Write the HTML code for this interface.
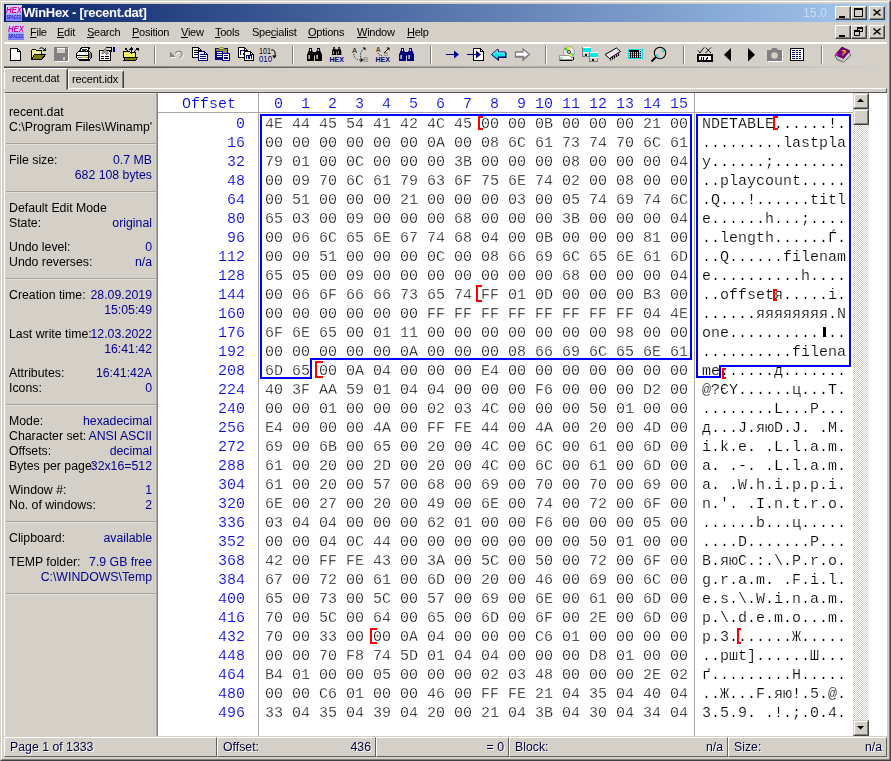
<!DOCTYPE html>
<html><head><meta charset="utf-8"><title>WinHex - [recent.dat]</title>
<style>
html,body{margin:0;padding:0;}
body{width:891px;height:761px;overflow:hidden;background:#d4d0c8;position:relative;font-family:"Liberation Sans",sans-serif;font-size:12px;color:#000;}
.abs,.abs>*{position:absolute;}
div{box-sizing:border-box;}
#hex,#lp,#menu,#title,.sp,.tabtxt{will-change:transform;}
#win{position:absolute;left:0;top:0;width:891px;height:761px;background:#d4d0c8;border-top:1px solid #d4d0c8;border-left:1px solid #d4d0c8;border-right:1px solid #404040;border-bottom:1px solid #404040;}
#win2{position:absolute;left:1px;top:1px;width:889px;height:759px;border-top:1px solid #fff;border-left:1px solid #fff;border-right:1px solid #808080;border-bottom:1px solid #808080;}
#title{position:absolute;left:4px;top:4px;width:883px;height:18px;background:linear-gradient(to right,#0a246a 0%,#a6caf0 100%);}
#title .cap{position:absolute;left:19px;top:1px;color:#fff;font-weight:bold;font-size:13px;line-height:16px;white-space:pre;letter-spacing:-0.3px;}
#title .ver{position:absolute;left:799px;top:1px;color:#c8dcf4;font-size:12.3px;line-height:16px;}
.wb{position:absolute;width:16px;height:14px;background:#d4d0c8;border-top:1px solid #fff;border-left:1px solid #fff;border-right:1px solid #404040;border-bottom:1px solid #404040;}
.wb:before{content:"";position:absolute;left:0;top:0;right:0;bottom:0;border-right:1px solid #808080;border-bottom:1px solid #808080;}
.wb svg{position:absolute;left:0;top:0;}
#menu{position:absolute;left:4px;top:22px;width:883px;height:20px;}
#menu span{position:absolute;top:3px;line-height:14px;font-size:11px;white-space:pre;letter-spacing:-0.25px;}
#menu u{text-decoration:underline;}
.hsep{position:absolute;height:2px;border-top:1px solid #808080;border-bottom:1px solid #fff;}
.vsep{position:absolute;width:2px;border-left:1px solid #808080;border-right:1px solid #fff;}
/* tabs */
#tab1{position:absolute;left:4px;top:68px;width:64px;height:21px;border-top:1px solid #fff;border-left:1px solid #fff;border-right:1px solid #404040;border-top-left-radius:2px;border-top-right-radius:2px;background:#d4d0c8;}
#tab1:before{content:"";position:absolute;right:0;top:1px;height:20px;border-right:1px solid #808080;}
#tab2{position:absolute;left:68px;top:70px;width:56px;height:18px;border-top:1px solid #fff;border-left:1px solid #fff;border-right:1px solid #404040;border-top-right-radius:2px;background:#d4d0c8;}
#tab2:before{content:"";position:absolute;right:0;top:1px;bottom:0;border-right:1px solid #808080;}
.tabtxt{position:absolute;font-size:11px;line-height:14px;white-space:pre;letter-spacing:-0.15px;}
/* left panel */
#lp{position:absolute;left:4px;top:93px;width:154px;height:643px;background:#d4d0c8;}
#lp .l,#lp .v{position:absolute;font-size:12.3px;line-height:14px;white-space:pre;}
#lp .l{left:5px;color:#000;}
#lp .v{right:6px;color:#00008c;text-align:right;}
#lp .s{position:absolute;left:2px;width:150px;height:2px;border-top:1px solid #a8a49c;border-bottom:1px solid #e4e1da;}
/* hex */
#hex{position:absolute;left:158px;top:93px;width:729px;height:643px;background:#fff;overflow:hidden;}
.mono{font-family:"Liberation Mono",monospace;font-size:15px;line-height:19px;white-space:pre;}
.r{position:absolute;left:0;height:19px;width:700px;}
.r span{position:absolute;top:0;font-family:"Liberation Mono",monospace;font-size:15px;line-height:19px;white-space:pre;color:#000;-webkit-text-stroke:0.3px #fff;}
.r .o{left:0;width:87px;text-align:right;color:#0000e0;-webkit-text-stroke:0.15px #fff;}
.r .h{left:107px;}
.r .t{left:544px;-webkit-text-stroke:0.2px #fff;}
.blue{color:#0000e0 !important;-webkit-text-stroke:0.15px #fff !important;}
.k{font-weight:normal;color:transparent;-webkit-text-stroke:0;background:linear-gradient(#000,#000) 4px 2px/3px 10px no-repeat;}
.bl{position:absolute;background:#0000ff;}
.rd{position:absolute;background:#ff0000;}
/* status */
.sp{position:absolute;top:737px;height:20px;border-top:1px solid #fff;border-left:1px solid #fff;border-right:1px solid #606060;border-bottom:1px solid #606060;font-size:12.3px;line-height:14px;color:#00003c;white-space:pre;text-shadow:1px 1px 0 #fff;}
.sp i{font-style:normal;position:absolute;top:2px;}
/* scrollbar */
.sbb{position:absolute;width:16px;height:16px;background:#d4d0c8;border-top:1px solid #d4d0c8;border-left:1px solid #d4d0c8;border-right:1px solid #404040;border-bottom:1px solid #404040;}
.sbb:before{content:"";position:absolute;left:0;top:0;right:0;bottom:0;border-top:1px solid #fff;border-left:1px solid #fff;border-right:1px solid #808080;border-bottom:1px solid #808080;}
</style></head><body>
<div id="win"></div><div id="win2"></div>
<div id="title">
<svg style="position:absolute;left:2px;top:1px" width="16" height="16" viewBox="0 0 16 16"><defs><linearGradient id="g1" x1="0" y1="0" x2="0" y2="1"><stop offset="0" stop-color="#b4b4fc"/><stop offset="1" stop-color="#7878f8"/></linearGradient></defs><rect width="16" height="16" fill="#d6d2fc"/><rect y="8" width="16" height="8" fill="url(#g1)"/><text x="0" y="7.500" font-family="Liberation Sans,sans-serif" font-size="9" font-weight="bold" font-style="italic" fill="#c800b0" textLength="16" lengthAdjust="spacingAndGlyphs">HEX</text><text x="0.500" y="13.500" font-family="Liberation Sans,sans-serif" font-size="5" font-weight="bold" fill="#1818d0" textLength="15" lengthAdjust="spacingAndGlyphs">SPACES</text></svg>
<div class="cap">WinHex - [recent.dat]</div>
<div class="ver">15.0</div>
<div class="wb" style="left:831px;top:2px"><svg width="16" height="14"><rect x="3" y="9" width="6" height="2" fill="#000"/></svg></div>
<div class="wb" style="left:847px;top:2px"><svg width="16" height="14"><rect x="2.5" y="1.5" width="8" height="8" fill="none" stroke="#000"/><rect x="2" y="1" width="9" height="2" fill="#000"/></svg></div>
<div class="wb" style="left:865px;top:2px"><svg width="16" height="14"><path d="M3.5 2.5L10.5 8.5M10.5 2.5L3.5 8.5" stroke="#000" stroke-width="1.5" fill="none"/></svg></div>
</div>
<div id="menu">
<svg style="position:absolute;left:4px;top:2px" width="16" height="16" viewBox="0 0 16 16"><defs><linearGradient id="g2" x1="0" y1="0" x2="0" y2="1"><stop offset="0" stop-color="#b4b4fc"/><stop offset="1" stop-color="#7878f8"/></linearGradient></defs><rect width="16" height="16" fill="#d6d2fc"/><rect y="8" width="16" height="8" fill="url(#g2)"/><text x="0" y="7.500" font-family="Liberation Sans,sans-serif" font-size="9" font-weight="bold" font-style="italic" fill="#c800b0" textLength="16" lengthAdjust="spacingAndGlyphs">HEX</text><text x="0.500" y="13.500" font-family="Liberation Sans,sans-serif" font-size="5" font-weight="bold" fill="#1818d0" textLength="15" lengthAdjust="spacingAndGlyphs">SPACES</text></svg>
<span style="left:26px"><u>F</u>ile</span>
<span style="left:53px"><u>E</u>dit</span>
<span style="left:83px"><u>S</u>earch</span>
<span style="left:128px"><u>P</u>osition</span>
<span style="left:177px"><u>V</u>iew</span>
<span style="left:211px"><u>T</u>ools</span>
<span style="left:248px">Spe<u>c</u>ialist</span>
<span style="left:304px"><u>O</u>ptions</span>
<span style="left:353px"><u>W</u>indow</span>
<span style="left:403px"><u>H</u>elp</span>
<div class="wb" style="left:831px;top:3px"><svg width="16" height="14"><rect x="3" y="9" width="6" height="2" fill="#000"/></svg></div>
<div class="wb" style="left:847px;top:3px"><svg width="16" height="14"><path d="M5.5 1.5h5v4h-5z" fill="none" stroke="#000"/><rect x="5" y="1" width="6" height="2" fill="#000"/><path d="M2.5 4.5h5v5h-5z" fill="#d4d0c8" stroke="#000"/><rect x="2" y="4" width="6" height="2" fill="#000"/></svg></div>
<div class="wb" style="left:865px;top:3px"><svg width="16" height="14"><path d="M3.5 2.5L10.5 8.5M10.5 2.5L3.5 8.5" stroke="#000" stroke-width="1.5" fill="none"/></svg></div>
</div>
<div style="position:absolute;left:4px;top:42px;width:883px;height:2px;background:#fff"></div>
<div id="tb" style="position:absolute;left:0;top:44px;width:891px;height:22px"><svg style="position:absolute;left:9px;top:2px" width="18" height="17" viewBox="0 0 18 17" shape-rendering="crispEdges"><path d="M1.5 2.5H8.5L11.5 5.500V14.500H1.500Z" fill="#fff" stroke="#000"/><path d="M8.500 2.500V5.500H11.500" fill="none" stroke="#000"/></svg>
<svg style="position:absolute;left:31px;top:2px" width="18" height="17" viewBox="0 0 18 17" shape-rendering="crispEdges"><path d="M0.500 4.500L1.500 3.500H4.500L5.500 4.500H10.500V8.500H3.500L0.500 13.500Z" fill="#f4f49c" stroke="#000"/><path d="M3.500 8.500H14.500L10.500 13.500H0.500Z" fill="#808000" stroke="#000"/><path d="M8.500 2.500Q10.500 0.500 13 3" fill="none" stroke="#000" shape-rendering="auto"/><path d="M14.500 1.500V5H11z" fill="#000"/></svg>
<svg style="position:absolute;left:54px;top:2px" width="18" height="17" viewBox="0 0 18 17" shape-rendering="crispEdges"><rect x="1" y="2" width="14" height="14" fill="#fff"/><rect x="0" y="1" width="14" height="14" fill="#808080"/><rect x="3" y="2" width="8" height="5" fill="#d4d0c8"/><rect x="3" y="2" width="8" height="1" fill="#fff"/><rect x="9" y="11" width="2" height="3" fill="#d4d0c8"/><rect x="12" y="2" width="1" height="1" fill="#d4d0c8"/></svg>
<svg style="position:absolute;left:76px;top:2px" width="18" height="17" viewBox="0 0 18 17" shape-rendering="crispEdges"><path d="M3.500 5.500L5.500 1.500H13.500L11.500 5.500Z" fill="#fff" stroke="#000"/><path d="M6 3.500H11M5.500 4.500H10" stroke="#000" fill="none" stroke-width="0.800"/><path d="M0.500 7.500L2.500 5.500H13.500L15.500 7.500V11.500L13.500 13.500H2.500L0.500 11.500Z" fill="#fff" stroke="#000"/><path d="M0.500 9.500H12.500M12.500 6V13" stroke="#000" fill="none"/><rect x="13" y="7" width="2" height="5" fill="#808080"/><rect x="2" y="11" width="10" height="1" fill="#808080"/><rect x="7" y="10" width="3" height="1.500" fill="#e8e800"/><path d="M2.500 14.500H13.500" stroke="#000"/></svg>
<svg style="position:absolute;left:99px;top:2px" width="18" height="17" viewBox="0 0 18 17" shape-rendering="crispEdges"><path d="M0.500 4.500H11.500V14.500H0.500Z" fill="#fff" stroke="#000"/><path d="M2 10.500H5M6 10.500H10M2 12.500H5M6 12.500H10" stroke="#000"/><path d="M2.500 7.500L6.500 2.500L9.500 7.500L7.500 8.500L5.500 6.500L4 8z" fill="#a0a0a0" stroke="#404040" stroke-width="0.600" shape-rendering="auto"/><path d="M6.500 1.500H12.500V5.500H10" fill="none" stroke="#000"/><rect x="14" y="1" width="2" height="5" fill="#000080"/></svg>
<svg style="position:absolute;left:123px;top:2px" width="18" height="17" viewBox="0 0 18 17" shape-rendering="crispEdges"><path d="M0.500 5.500H6.500L7.500 6.500H12.500V11.500H0.500Z" fill="#f0f060" stroke="#000"/><path d="M2.500 11.500H14.500L12.500 14.500H0.500Z" fill="#808000" stroke="#000"/><path d="M8.500 8V2M3 3L6 6M14 3L11 6" stroke="#000" fill="none" shape-rendering="auto"/><path d="M6.500 3.500L8.500 1L10.500 3.500ZM1.500 1.500H5L1.500 5ZM15.500 1.500H12L15.500 5Z" fill="#000"/></svg>
<div class="vsep" style="left:154px;top:2px;height:18px"></div>
<svg style="position:absolute;left:169px;top:2px" width="18" height="17" viewBox="0 0 18 17" shape-rendering="crispEdges"><g shape-rendering="auto"><g transform="translate(1,1)"><path d="M1 5.500V11H6.500Z" fill="#fff"/><path d="M6 7.500Q8 5 10.500 5.300Q13.500 6 13 9Q12.500 11.500 10.500 12" fill="none" stroke="#fff" stroke-width="1.200"/></g><path d="M1 5.500V11H6.500Z" fill="#808080"/><path d="M6 7.500Q8 5 10.500 5.300Q13.500 6 13 9Q12.500 11.500 10.500 12" fill="none" stroke="#808080" stroke-width="1.200"/></g></svg>
<svg style="position:absolute;left:192px;top:2px" width="18" height="17" viewBox="0 0 18 17" shape-rendering="crispEdges"><path d="M0.5 1.5H6.5L9.5 4.5V11.5H0.5Z" fill="#fff" stroke="#000"/><path d="M6.5 1.5V4.5H9.5" fill="none" stroke="#000"/><path d="M2 4.5H6M2 6.5H8M2 8.5H8" stroke="#000"/><path d="M6.5 5.5H12.5L15.5 8.5V14.5H6.5Z" fill="#fff" stroke="#000080"/><path d="M12.5 5.5V8.5H15.5" fill="none" stroke="#000080"/><path d="M8 8.5H12M8 10.5H14M8 12.5H14" stroke="#000080"/></svg>
<svg style="position:absolute;left:214px;top:2px" width="18" height="17" viewBox="0 0 18 17" shape-rendering="crispEdges"><rect x="1.500" y="2.500" width="12" height="11" fill="#8c8c60" stroke="#000080"/><path d="M4 3.500L6 1.500H9L11 3.500Z" fill="#e8e000" stroke="#606000" stroke-width="0.600" shape-rendering="auto"/><rect x="6.500" y="2" width="2" height="1" fill="#d4d0c8"/><rect x="2.500" y="5.500" width="6" height="7" fill="#fff" stroke="#000080"/><path d="M3 7.500H8M3 9.500H8M3 11.500H8" stroke="#000080"/><rect x="4" y="8" width="3" height="1" fill="#fff"/><rect x="8.500" y="7.500" width="7" height="7" fill="#fff" stroke="#000080"/><path d="M10 9.500H14M10 11.500H14M10 12.500H14" stroke="#000080"/><rect x="11" y="10" width="4" height="1" fill="#fff"/></svg>
<svg style="position:absolute;left:238px;top:2px" width="18" height="17" viewBox="0 0 18 17" shape-rendering="crispEdges"><path d="M0.5 1.5H6.5L9.5 4.5V11.5H0.5Z" fill="#fff" stroke="#000"/><path d="M6.5 1.5V4.5H9.5" fill="none" stroke="#000"/><path d="M2.500 9V4.500H5.500M5.500 6.500V9" stroke="#000080" stroke-width="1.500" fill="none"/><path d="M6.5 5.5H12.5L15.5 8.5V14.5H6.5Z" fill="#fff" stroke="#000"/><path d="M12.5 5.5V8.5H15.5" fill="none" stroke="#000"/><path d="M8.500 13V9.500H13.500V13M11 10V13" stroke="#000080" stroke-width="1.400" fill="none"/></svg>
<svg style="position:absolute;left:259px;top:2px" width="19" height="18" viewBox="0 0 19 18" shape-rendering="crispEdges"><text x="0" y="8" font-family="Liberation Sans,sans-serif" font-size="8.500" fill="#000" textLength="12" lengthAdjust="spacingAndGlyphs">101</text><text x="0" y="16" font-family="Liberation Sans,sans-serif" font-size="9" fill="#000080" textLength="13" lengthAdjust="spacingAndGlyphs">010</text><path d="M12 4Q17 3 16 10" fill="none" stroke="#000" shape-rendering="auto"/><path d="M13 9.500H17.500L15.500 12.500Z" fill="#000" shape-rendering="auto"/></svg>
<div class="vsep" style="left:292px;top:2px;height:18px"></div>
<svg style="position:absolute;left:307px;top:2px" width="18" height="17" viewBox="0 0 18 17" shape-rendering="crispEdges"><g transform="translate(0,2) scale(1.0)" shape-rendering="auto"><path d="M2 0H5V2L7 6.500V13H0V6.500L2 2Z" fill="#000"/><path d="M10 0H13V2L15 6.500V13H8V6.500L10 2Z" fill="#000"/><rect x="6" y="4" width="3" height="3.500" fill="#000"/><rect x="3" y="1" width="1" height="2" fill="#fff"/><rect x="10.800" y="1" width="1" height="2" fill="#fff"/><rect x="1.500" y="7" width="1.200" height="4" fill="#fff"/><rect x="9.500" y="7" width="1.200" height="4" fill="#fff"/></g></svg>
<svg style="position:absolute;left:329px;top:2px" width="18" height="17" viewBox="0 0 18 17" shape-rendering="crispEdges"><g transform="translate(3,1) scale(0.62)" shape-rendering="auto"><path d="M2 0H5V2L7 6.500V13H0V6.500L2 2Z" fill="#000"/><path d="M10 0H13V2L15 6.500V13H8V6.500L10 2Z" fill="#000"/><rect x="6" y="4" width="3" height="3.500" fill="#000"/><rect x="3" y="1" width="1" height="2" fill="#fff"/><rect x="10.800" y="1" width="1" height="2" fill="#fff"/><rect x="1.500" y="7" width="1.200" height="4" fill="#fff"/><rect x="9.500" y="7" width="1.200" height="4" fill="#fff"/></g><text x="0.500" y="16" font-family="Liberation Sans,sans-serif" font-size="7" font-weight="bold" fill="#000080" textLength="14.500" lengthAdjust="spacingAndGlyphs">HEX</text></svg>
<svg style="position:absolute;left:351px;top:2px" width="18" height="17" viewBox="0 0 18 17" shape-rendering="crispEdges"><text x="1" y="7" font-family="Liberation Sans,sans-serif" font-size="7.500" fill="#000">A</text><text x="12" y="16" font-family="Liberation Sans,sans-serif" font-size="8" fill="#808080">B</text><g shape-rendering="auto"><path d="M3 8Q3 14 10 14" fill="none" stroke="#000" stroke-dasharray="1 1.200"/><path d="M9.500 11.500L12.500 14L9.500 16.500Z" fill="#000"/><path d="M9.500 11Q9 5 13.500 2.500" fill="none" stroke="#000" stroke-dasharray="1 1.200"/><path d="M11.500 1.500H14.500V4.500Z" fill="#000"/></g></svg>
<svg style="position:absolute;left:375px;top:2px" width="18" height="17" viewBox="0 0 18 17" shape-rendering="crispEdges"><text x="1" y="6" font-family="Liberation Sans,sans-serif" font-size="6.500" fill="#000">A</text><text x="9" y="10" font-family="Liberation Sans,sans-serif" font-size="6" fill="#808080">B</text><g shape-rendering="auto"><path d="M3 7Q4 10 8 9.500" fill="none" stroke="#000" stroke-dasharray="1 1"/><path d="M9 7L14 2" fill="none" stroke="#000"/><path d="M11.500 1.500H14.500V4.500Z" fill="#000"/></g><text x="0.500" y="16" font-family="Liberation Sans,sans-serif" font-size="7" font-weight="bold" fill="#000080" textLength="14.500" lengthAdjust="spacingAndGlyphs">HEX</text></svg>
<svg style="position:absolute;left:399px;top:2px" width="18" height="17" viewBox="0 0 18 17" shape-rendering="crispEdges"><g transform="translate(0,2) scale(1.0)" shape-rendering="auto"><path d="M2 0H5V2L7 6.500V13H0V6.500L2 2Z" fill="#000080"/><path d="M10 0H13V2L15 6.500V13H8V6.500L10 2Z" fill="#000080"/><rect x="6" y="4" width="3" height="3.500" fill="#000080"/><rect x="3" y="1" width="1" height="2" fill="#fff"/><rect x="10.800" y="1" width="1" height="2" fill="#fff"/><rect x="1.500" y="7" width="1.200" height="4" fill="#fff"/><rect x="9.500" y="7" width="1.200" height="4" fill="#fff"/></g></svg>
<div class="vsep" style="left:430px;top:2px;height:18px"></div>
<svg style="position:absolute;left:445px;top:2px" width="18" height="17" viewBox="0 0 18 17" shape-rendering="crispEdges"><path d="M1 8.500H10" stroke="#000080" fill="none"/><path d="M9 4.500L14 8.500L9 12.500Z" fill="#000080" shape-rendering="auto"/></svg>
<svg style="position:absolute;left:467px;top:2px" width="18" height="17" viewBox="0 0 18 17" shape-rendering="crispEdges"><path d="M6.5 2.5H13.5L16.5 5.5V14.5H6.5Z" fill="#fff" stroke="#000"/><path d="M13.5 2.5V5.5H16.5" fill="none" stroke="#000"/><path d="M0 8.500H10" stroke="#000080" fill="none"/><path d="M9 4.500L14 8.500L9 12.500Z" fill="#000080" shape-rendering="auto"/></svg>
<svg style="position:absolute;left:490px;top:2px" width="18" height="17" viewBox="0 0 18 17" shape-rendering="crispEdges"><g shape-rendering="auto"><path d="M2.500 9.500L9 4V7H16.500V12H9V15Z" fill="#000"/><path d="M1.500 8.500L8 3V6H15.500V11H8V14Z" fill="#00e8e8" stroke="#000080"/><path d="M3 8.500L7.500 4.500V7H15" fill="none" stroke="#c0ffff" stroke-width="0.800"/></g></svg>
<svg style="position:absolute;left:514px;top:2px" width="18" height="17" viewBox="0 0 18 17" shape-rendering="crispEdges"><g shape-rendering="auto"><path d="M15.500 8.500L9 3V6H1.500V11H9V14Z" fill="#fff" stroke="#808080" stroke-width="1.300"/><path d="M1.500 10.500H9.500V13L14.500 9" fill="none" stroke="#808080" stroke-width="1.500"/></g></svg>
<div class="vsep" style="left:545px;top:2px;height:18px"></div>
<svg style="position:absolute;left:558px;top:2px" width="18" height="17" viewBox="0 0 18 17" shape-rendering="crispEdges"><g shape-rendering="auto"><ellipse cx="11" cy="6" rx="5.500" ry="5.500" fill="#e8e8e8" stroke="#808080" stroke-width="0.600"/><path d="M11 6L9.500 0.700L12.500 0.700Z" fill="#f0f000"/><path d="M11 6L6 3L7.500 1.500Z" fill="#00c000"/><path d="M11 6L16 8L15 10Z" fill="#00e0e0"/><path d="M11 6L13 10.500L15 9.500Z" fill="#e8e800"/><circle cx="11" cy="6" r="1.500" fill="#fff" stroke="#000" stroke-width="0.800"/><path d="M1.500 9.500H11L13 11.500H15.500V13.500H1.500Z" fill="#fff" stroke="#808080" stroke-width="0.800"/><path d="M1.500 14.500H14.500M15.500 11V14" stroke="#000" fill="none"/><rect x="2.500" y="11.500" width="2" height="1" fill="#00c000"/></g></svg>
<svg style="position:absolute;left:582px;top:2px" width="18" height="17" viewBox="0 0 18 17" shape-rendering="crispEdges"><rect x="0" y="1" width="9" height="10" fill="#808080"/><rect x="1" y="1" width="8" height="1" fill="#fff"/><rect x="1" y="2" width="8" height="4" fill="#00e8e8"/><rect x="1" y="6" width="8" height="1" fill="#fff"/><rect x="1" y="7" width="7" height="3" fill="#d4d0c8"/><rect x="3" y="8" width="2" height="2" fill="#000"/><rect x="7" y="6" width="9" height="10" fill="#808080"/><rect x="8" y="6" width="8" height="1" fill="#fff"/><rect x="8" y="7" width="8" height="4" fill="#00e8e8"/><rect x="8" y="11" width="8" height="1" fill="#fff"/><rect x="8" y="12" width="7" height="3" fill="#d4d0c8"/><rect x="10" y="13" width="2" height="2" fill="#000"/></svg>
<svg style="position:absolute;left:604px;top:2px" width="18" height="17" viewBox="0 0 18 17" shape-rendering="crispEdges"><g shape-rendering="auto"><path d="M1 8.500L12.500 2L16.500 5.500L5.500 12.500Z" fill="#e8e8e8" stroke="#000" stroke-width="1"/><path d="M6.500 12V14.500M8.500 11V13.500M10.500 10V12.500M12.500 8.500V11M14.500 7.500V10" stroke="#000" stroke-width="1.200"/><path d="M7 11.500L15 6.500" stroke="#a000a0" stroke-width="0.900" stroke-dasharray="1 1"/></g></svg>
<svg style="position:absolute;left:627px;top:2px" width="18" height="17" viewBox="0 0 18 17" shape-rendering="crispEdges"><rect x="1" y="3" width="15" height="10" fill="#00e8e8"/><rect x="2" y="4" width="13" height="8" fill="#d0d0d0"/><rect x="2" y="4" width="10" height="2" fill="#000"/><path d="M3.500 6V12M5.500 6V12M7.500 6V12M9.500 6V12M11.500 6V12" stroke="#000"/><path d="M13.500 5V12" stroke="#000080" stroke-dasharray="1 1"/><path d="M2 7.500H13M2 9.500H13M2 11.500H13" stroke="#808080" stroke-dasharray="1 1"/></svg>
<svg style="position:absolute;left:650px;top:2px" width="18" height="17" viewBox="0 0 18 17" shape-rendering="crispEdges"><g shape-rendering="auto"><circle cx="10" cy="7" r="5.700" fill="#d4d0c8" stroke="#000" stroke-width="1.100"/><path d="M11 3Q13.500 4 13.500 6.500" fill="none" stroke="#00e0e0" stroke-width="1.200"/><path d="M6.500 8Q7 10 9 10.700" fill="none" stroke="#00e0e0" stroke-width="1.200"/><path d="M6 11L1.500 15.500" stroke="#000" stroke-width="2"/></g></svg>
<div class="vsep" style="left:683px;top:2px;height:18px"></div>
<svg style="position:absolute;left:697px;top:2px" width="18" height="17" viewBox="0 0 18 17" shape-rendering="crispEdges"><g shape-rendering="auto"><path d="M1 4.500L3 7L7 1.500" fill="none" stroke="#000" stroke-width="0.900"/><path d="M8.500 1.500L14 7M14 1.500L8.500 7" fill="none" stroke="#000" stroke-width="0.900"/></g><rect x="0" y="8" width="16" height="8" fill="#000"/><rect x="2" y="10" width="12" height="4" fill="#fff"/><path d="M4.500 11V14M6.500 11V14M9 14L11 11" stroke="#000"/></svg>
<svg style="position:absolute;left:723px;top:2px" width="18" height="17" viewBox="0 0 18 17" shape-rendering="crispEdges"><path d="M8 2V15.500L1 8.750Z" fill="#000" shape-rendering="auto"/></svg>
<svg style="position:absolute;left:747px;top:2px" width="18" height="17" viewBox="0 0 18 17" shape-rendering="crispEdges"><path d="M1 2V15.500L8 8.750Z" fill="#000" shape-rendering="auto"/></svg>
<svg style="position:absolute;left:767px;top:2px" width="18" height="17" viewBox="0 0 18 17" shape-rendering="crispEdges"><rect x="1" y="5" width="15" height="11" fill="#fff"/><rect x="0" y="4" width="15" height="11" fill="#808080"/><path d="M4 4L5.500 2H9.500L11 4Z" fill="#808080" shape-rendering="auto"/><circle cx="7.500" cy="9.500" r="3.300" fill="#d4d0c8" shape-rendering="auto"/></svg>
<svg style="position:absolute;left:789px;top:2px" width="18" height="17" viewBox="0 0 18 17" shape-rendering="crispEdges"><rect x="1.500" y="2.500" width="13" height="12" fill="#fff" stroke="#000" stroke-width="1"/><path d="M3 4.500H13M3 6.500H13M3 8.500H13M3 10.500H13M3 12.500H13" stroke="#000080" stroke-dasharray="3 1 2 1 2 1"/></svg>
<div class="vsep" style="left:821px;top:2px;height:18px"></div>
<svg style="position:absolute;left:834px;top:2px" width="18" height="18" viewBox="0 0 18 18" shape-rendering="crispEdges"><g shape-rendering="auto"><path d="M1 9.500L3 13.500L9.500 16L16.500 10L15.500 6.500Z" fill="#fff" stroke="#404040" stroke-width="0.800"/><path d="M2 11L9 13.800L16 8M2.500 12.300L9.300 15L16 9.200" fill="none" stroke="#808080" stroke-width="0.600"/><path d="M1 9L8 1L16 5L9.500 12.500Z" fill="#800080" stroke="#400040" stroke-width="0.800"/><path d="M1 9L2.500 7.500L4 8L3 10Z" fill="#c040c0"/><text x="7" y="9.500" font-family="Liberation Sans,sans-serif" font-size="8" font-weight="bold" fill="#ffe800" transform="rotate(12 9 7)">?</text></g></svg></div>
<div style="position:absolute;left:4px;top:66px;width:883px;height:1px;background:linear-gradient(to right,#808080,#d4d0c8)"></div><div style="position:absolute;left:4px;top:67px;width:883px;height:1px;background:linear-gradient(to right,#404040,#d4d0c8)"></div>
<!-- tab strip -->
<div style="position:absolute;left:68px;top:88px;width:819px;height:5px;border-top:1px solid #fff;border-bottom:1px solid #585858;border-right:1px solid #585858;background:#d4d0c8"></div>
<div style="position:absolute;left:5px;top:92px;width:153px;height:1px;background:#585858"></div>
<div id="tab2"></div><div class="tabtxt" style="left:72px;top:72px">recent.idx</div>
<div id="tab1"></div><div class="tabtxt" style="left:12px;top:71px">recent.dat</div>
<div id="lp">
<div style="position:absolute;left:0;top:0;width:154px;height:643px;border-left:1px solid #fff;border-top:1px solid #e8e6e0;border-right:1px solid #808080"></div><div style="position:absolute;left:152px;top:0;width:1px;height:643px;background:#a8a8a4"></div>
<div class="l" style="top:12px">recent.dat</div>
<div class="l" style="top:27px">C:\Program Files\Winamp'</div>
<div class="l" style="top:60px">File size:</div>
<div class="v" style="top:60px">0.7 MB</div>
<div class="v" style="top:75px">682 108 bytes</div>
<div class="l" style="top:108px">Default Edit Mode</div>
<div class="l" style="top:123px">State:</div>
<div class="v" style="top:123px">original</div>
<div class="l" style="top:147px">Undo level:</div>
<div class="v" style="top:147px">0</div>
<div class="l" style="top:162px">Undo reverses:</div>
<div class="v" style="top:162px">n/a</div>
<div class="l" style="top:195px">Creation time:</div>
<div class="v" style="top:195px">28.09.2019</div>
<div class="v" style="top:210px">15:05:49</div>
<div class="l" style="top:234px">Last write time:</div>
<div class="v" style="top:234px">12.03.2022</div>
<div class="v" style="top:249px">16:41:42</div>
<div class="l" style="top:273px">Attributes:</div>
<div class="v" style="top:273px">16:41:42A</div>
<div class="l" style="top:288px">Icons:</div>
<div class="v" style="top:288px">0</div>
<div class="l" style="top:321px">Mode:</div>
<div class="v" style="top:321px">hexadecimal</div>
<div class="l" style="top:336px">Character set:</div>
<div class="v" style="top:336px">ANSI ASCII</div>
<div class="l" style="top:351px">Offsets:</div>
<div class="v" style="top:351px">decimal</div>
<div class="l" style="top:366px">Bytes per page:</div>
<div class="v" style="top:366px">32x16=512</div>
<div class="l" style="top:390px">Window #:</div>
<div class="v" style="top:390px">1</div>
<div class="l" style="top:405px">No. of windows:</div>
<div class="v" style="top:405px">2</div>
<div class="l" style="top:438px">Clipboard:</div>
<div class="v" style="top:438px">available</div>
<div class="l" style="top:462px">TEMP folder:</div>
<div class="v" style="top:462px">7.9 GB free</div>
<div class="v" style="top:477px">C:\WINDOWS\Temp</div>
<div class="s" style="top:50px"></div>
<div class="s" style="top:98px"></div>
<div class="s" style="top:185px"></div>
<div class="s" style="top:311px"></div>
<div class="s" style="top:428px"></div>
<div class="s" style="top:500px"></div>
</div>
<div id="hex">
<div style="position:absolute;left:100px;top:0;width:1px;height:643px;background:#aaa8a0"></div>
<div style="position:absolute;left:536px;top:0;width:1px;height:643px;background:#aaa8a0"></div>
<div style="position:absolute;left:0;top:19px;width:695px;height:1px;background:#aaa8a0"></div>
<div class="r" style="top:2px"><span class="o blue" style="width:78px">Offset</span><span class="h blue" style="left:107px"> 0  1  2  3  4  5  6  7  8  9 10 11 12 13 14 15</span></div>
<div class="r" style="top:22px"><span class="o">0</span><span class="h">4E 44 45 54 41 42 4C 45 00 00 0B 00 00 00 21 00</span><span class="t">NDETABLE......!.</span></div>
<div class="r" style="top:41px"><span class="o">16</span><span class="h">00 00 00 00 00 00 0A 00 08 6C 61 73 74 70 6C 61</span><span class="t">.........lastpla</span></div>
<div class="r" style="top:60px"><span class="o">32</span><span class="h">79 01 00 0C 00 00 00 3B 00 00 00 08 00 00 00 04</span><span class="t">y......;........</span></div>
<div class="r" style="top:79px"><span class="o">48</span><span class="h">00 09 70 6C 61 79 63 6F 75 6E 74 02 00 08 00 00</span><span class="t">..playcount.....</span></div>
<div class="r" style="top:98px"><span class="o">64</span><span class="h">00 51 00 00 00 21 00 00 00 03 00 05 74 69 74 6C</span><span class="t">.Q...!......titl</span></div>
<div class="r" style="top:117px"><span class="o">80</span><span class="h">65 03 00 09 00 00 00 68 00 00 00 3B 00 00 00 04</span><span class="t">e......h...;....</span></div>
<div class="r" style="top:136px"><span class="o">96</span><span class="h">00 06 6C 65 6E 67 74 68 04 00 0B 00 00 00 81 00</span><span class="t">..length......Ѓ.</span></div>
<div class="r" style="top:155px"><span class="o">112</span><span class="h">00 00 51 00 00 00 0C 00 08 66 69 6C 65 6E 61 6D</span><span class="t">..Q......filenam</span></div>
<div class="r" style="top:174px"><span class="o">128</span><span class="h">65 05 00 09 00 00 00 00 00 00 00 68 00 00 00 04</span><span class="t">e..........h....</span></div>
<div class="r" style="top:193px"><span class="o">144</span><span class="h">00 06 6F 66 66 73 65 74 FF 01 0D 00 00 00 B3 00</span><span class="t">..offsetя.....і.</span></div>
<div class="r" style="top:212px"><span class="o">160</span><span class="h">00 00 00 00 00 00 FF FF FF FF FF FF FF FF 04 4E</span><span class="t">......яяяяяяяя.N</span></div>
<div class="r" style="top:231px"><span class="o">176</span><span class="h">6F 6E 65 00 01 11 00 00 00 00 00 00 00 98 00 00</span><span class="t">one..........<b class="k">▌</b>..</span></div>
<div class="r" style="top:250px"><span class="o">192</span><span class="h">00 00 00 00 00 0A 00 00 00 08 66 69 6C 65 6E 61</span><span class="t">..........filena</span></div>
<div class="r" style="top:269px"><span class="o">208</span><span class="h">6D 65 00 0A 04 00 00 00 E4 00 00 00 00 00 00 00</span><span class="t">me......д.......</span></div>
<div class="r" style="top:288px"><span class="o">224</span><span class="h">40 3F AA 59 01 04 04 00 00 00 F6 00 00 00 D2 00</span><span class="t">@?ЄY......ц...Т.</span></div>
<div class="r" style="top:307px"><span class="o">240</span><span class="h">00 00 01 00 00 00 02 03 4C 00 00 00 50 01 00 00</span><span class="t">........L...P...</span></div>
<div class="r" style="top:326px"><span class="o">256</span><span class="h">E4 00 00 00 4A 00 FF FE 44 00 4A 00 20 00 4D 00</span><span class="t">д...J.яюD.J. .M.</span></div>
<div class="r" style="top:345px"><span class="o">272</span><span class="h">69 00 6B 00 65 00 20 00 4C 00 6C 00 61 00 6D 00</span><span class="t">i.k.e. .L.l.a.m.</span></div>
<div class="r" style="top:364px"><span class="o">288</span><span class="h">61 00 20 00 2D 00 20 00 4C 00 6C 00 61 00 6D 00</span><span class="t">a. .-. .L.l.a.m.</span></div>
<div class="r" style="top:383px"><span class="o">304</span><span class="h">61 00 20 00 57 00 68 00 69 00 70 00 70 00 69 00</span><span class="t">a. .W.h.i.p.p.i.</span></div>
<div class="r" style="top:402px"><span class="o">320</span><span class="h">6E 00 27 00 20 00 49 00 6E 00 74 00 72 00 6F 00</span><span class="t">n.&#x27;. .I.n.t.r.o.</span></div>
<div class="r" style="top:421px"><span class="o">336</span><span class="h">03 04 04 00 00 00 62 01 00 00 F6 00 00 00 05 00</span><span class="t">......b...ц.....</span></div>
<div class="r" style="top:440px"><span class="o">352</span><span class="h">00 00 04 0C 44 00 00 00 00 00 00 00 50 01 00 00</span><span class="t">....D.......P...</span></div>
<div class="r" style="top:459px"><span class="o">368</span><span class="h">42 00 FF FE 43 00 3A 00 5C 00 50 00 72 00 6F 00</span><span class="t">B.яюC.:.\.P.r.o.</span></div>
<div class="r" style="top:478px"><span class="o">384</span><span class="h">67 00 72 00 61 00 6D 00 20 00 46 00 69 00 6C 00</span><span class="t">g.r.a.m. .F.i.l.</span></div>
<div class="r" style="top:497px"><span class="o">400</span><span class="h">65 00 73 00 5C 00 57 00 69 00 6E 00 61 00 6D 00</span><span class="t">e.s.\.W.i.n.a.m.</span></div>
<div class="r" style="top:516px"><span class="o">416</span><span class="h">70 00 5C 00 64 00 65 00 6D 00 6F 00 2E 00 6D 00</span><span class="t">p.\.d.e.m.o...m.</span></div>
<div class="r" style="top:535px"><span class="o">432</span><span class="h">70 00 33 00 00 0A 04 00 00 00 C6 01 00 00 00 00</span><span class="t">p.3.......Ж.....</span></div>
<div class="r" style="top:554px"><span class="o">448</span><span class="h">00 00 70 F8 74 5D 01 04 04 00 00 00 D8 01 00 00</span><span class="t">..pшt]......Ш...</span></div>
<div class="r" style="top:573px"><span class="o">464</span><span class="h">B4 01 00 00 05 00 00 00 02 03 48 00 00 00 2E 02</span><span class="t">ґ.........H.....</span></div>
<div class="r" style="top:592px"><span class="o">480</span><span class="h">00 00 C6 01 00 00 46 00 FF FE 21 04 35 04 40 04</span><span class="t">..Ж...F.яю!.5.@.</span></div>
<div class="r" style="top:611px"><span class="o">496</span><span class="h">33 04 35 04 39 04 20 00 21 04 3B 04 30 04 34 04</span><span class="t">3.5.9. .!.;.0.4.</span></div>
<div class="bl" style="left:102px;top:21px;width:432px;height:2px"></div>
<div class="bl" style="left:102px;top:21px;width:2px;height:265px"></div>
<div class="bl" style="left:532px;top:21px;width:2px;height:246px"></div>
<div class="bl" style="left:152px;top:265px;width:382px;height:2px"></div>
<div class="bl" style="left:152px;top:265px;width:2px;height:21px"></div>
<div class="bl" style="left:102px;top:284px;width:52px;height:2px"></div>
<div class="bl" style="left:538px;top:21px;width:155px;height:2px"></div>
<div class="bl" style="left:538px;top:21px;width:2px;height:264px"></div>
<div class="bl" style="left:691px;top:21px;width:2px;height:253px"></div>
<div class="bl" style="left:561px;top:272px;width:132px;height:2px"></div>
<div class="bl" style="left:561px;top:272px;width:2px;height:13px"></div>
<div class="bl" style="left:538px;top:283px;width:25px;height:2px"></div>
<div class="rd" style="left:320px;top:23px;width:2px;height:14px"></div>
<div class="rd" style="left:320px;top:23px;width:5px;height:2px"></div>
<div class="rd" style="left:320px;top:35px;width:5px;height:2px"></div>
<div class="rd" style="left:318px;top:192px;width:2px;height:17px"></div>
<div class="rd" style="left:318px;top:192px;width:6px;height:2px"></div>
<div class="rd" style="left:318px;top:207px;width:6px;height:2px"></div>
<div class="rd" style="left:157px;top:268px;width:2px;height:17px"></div>
<div class="rd" style="left:157px;top:268px;width:8px;height:2px"></div>
<div class="rd" style="left:157px;top:283px;width:8px;height:2px"></div>
<div class="rd" style="left:212px;top:535px;width:2px;height:16px"></div>
<div class="rd" style="left:212px;top:535px;width:7px;height:2px"></div>
<div class="rd" style="left:212px;top:549px;width:7px;height:2px"></div>
<div class="rd" style="left:615px;top:23px;width:2px;height:14px"></div>
<div class="rd" style="left:615px;top:23px;width:5px;height:2px"></div>
<div class="rd" style="left:615px;top:35px;width:5px;height:2px"></div>
<div class="rd" style="left:615px;top:196px;width:2px;height:12px"></div>
<div class="rd" style="left:615px;top:196px;width:4px;height:2px"></div>
<div class="rd" style="left:615px;top:206px;width:4px;height:2px"></div>
<div class="rd" style="left:564px;top:275px;width:2px;height:11px"></div>
<div class="rd" style="left:564px;top:275px;width:4px;height:2px"></div>
<div class="rd" style="left:564px;top:284px;width:4px;height:2px"></div>
<div class="rd" style="left:579px;top:535px;width:2px;height:16px"></div>
<div class="rd" style="left:579px;top:535px;width:4px;height:2px"></div>
<div class="rd" style="left:579px;top:549px;width:4px;height:2px"></div>
<div style="position:absolute;left:695px;top:0;width:16px;height:643px;background:repeating-conic-gradient(#d4d0c8 0% 25%,#fff 0% 50%) 0 0/2px 2px"></div>
<div class="sbb" style="left:695px;top:0"><svg width="16" height="16" style="position:absolute;left:-1px;top:-1px"><path d="M4 9h7l-3.500 -3.500z" fill="#000"/></svg></div>
<div class="sbb" style="left:695px;top:16px"></div>
<div class="sbb" style="left:695px;top:627px"><svg width="16" height="16" style="position:absolute;left:-1px;top:-1px"><path d="M4 6h7l-3.500 3.500z" fill="#000"/></svg></div>
</div>
<div class="sp" style="left:4px;width:213px"><i style="left:5px">Page 1 of 1333</i></div>
<div class="sp" style="left:217px;width:159px"><i style="left:5px">Offset:</i><i style="right:4px">436</i></div>
<div class="sp" style="left:376px;width:133px"><i style="right:4px">= 0</i></div>
<div class="sp" style="left:509px;width:219px"><i style="left:5px">Block:</i><i style="right:4px">n/a</i></div>
<div class="sp" style="left:728px;width:159px"><i style="left:5px">Size:</i><i style="right:4px">n/a</i></div>
</body></html>
